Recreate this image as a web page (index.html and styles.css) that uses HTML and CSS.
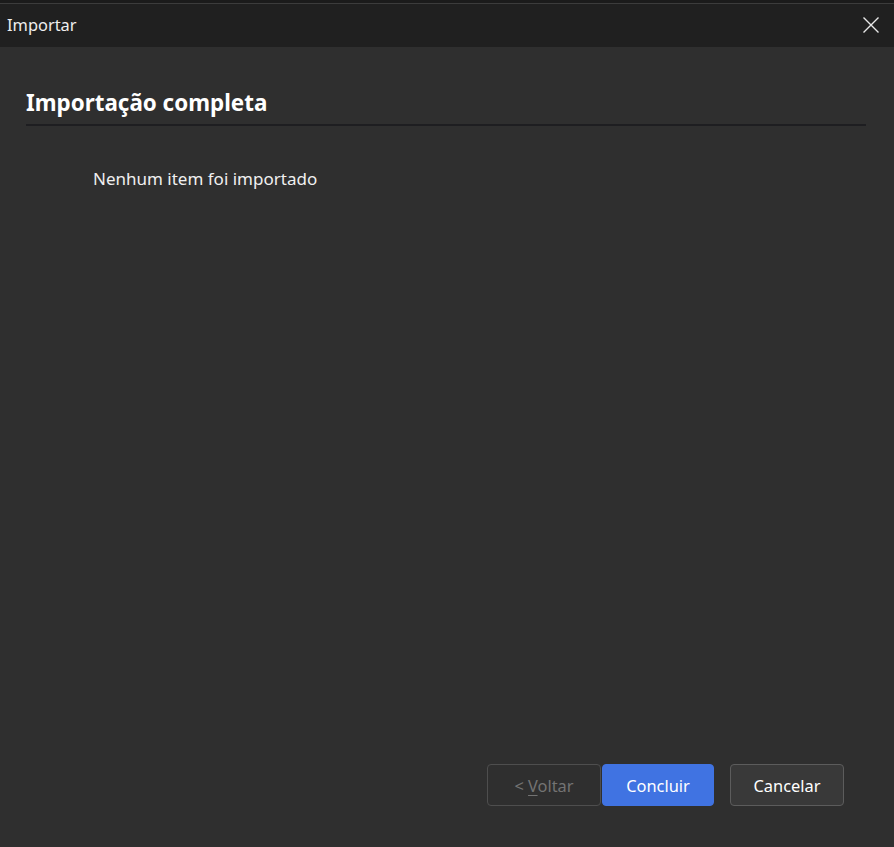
FILE: index.html
```html
<!DOCTYPE html>
<html lang="pt">
<head>
<meta charset="utf-8">
<link rel="stylesheet" href="styles.css">
</head>
<body>
<div class="window">
  <div class="topedge"></div>
  <header class="titlebar">
    <span class="title">Importar</span>
    <svg class="close" width="18" height="18" viewBox="0 0 18 18"><path d="M1.5 1.5 L16.5 16.5 M16.5 1.5 L1.5 16.5" stroke="#e8e8e8" stroke-width="1.4" fill="none"/></svg>
  </header>
  <main class="content">
    <h1 class="heading">Importação completa</h1>
    <p class="message">Nenhum item foi importado</p>
    <div class="spacer"></div>
    <div class="buttons">
      <button class="btn btn-disabled">&lt; <u>V</u>oltar</button>
      <button class="btn btn-primary">Concluir</button>
      <button class="btn btn-secondary">Cancelar</button>
    </div>
  </main>
</div>
</body>
</html>
```
FILE: styles.css
```css
html, body {
  margin: 0;
  padding: 0;
  height: 100%;
  background: #2f2f2f;
}
body {
  font-family: "Noto Sans", "Open Sans", sans-serif;
  color: #f2f2f2;
}
.window {
  display: flex;
  flex-direction: column;
  height: 847px;
}
.topedge {
  height: 3px;
  background: #1b1b1b;
  border-bottom: 1px solid #3c3c3c;
}
.titlebar {
  height: 43px;
  background: #202020;
  display: flex;
  align-items: center;
  justify-content: space-between;
  padding: 0 14px 0 7px;
}
.title {
  font-size: 16.4px;
  color: #eeeeee;
  padding-bottom: 2px;
}
.close {
  display: block;
  margin-top: -2px;
}
.content {
  flex: 1;
  display: flex;
  flex-direction: column;
  padding: 0 28px 41px 27px;
}
.heading {
  margin: 41px 0 0 -1px;
  font-size: 22.4px;
  line-height: 30px;
  font-weight: 700;
  color: #ffffff;
  padding-bottom: 6px;
  border-bottom: 2px solid #1e1e21;
}
.message {
  margin: 41px 0 0 66px;
  font-size: 17px;
  line-height: 24px;
  color: #f0f0f0;
}
.spacer {
  flex: 1;
}
.buttons {
  display: flex;
  justify-content: flex-end;
  padding-right: 22px;
}
.btn {
  height: 42px;
  border-radius: 4px;
  font-family: inherit;
  font-size: 16.4px;
  padding: 0;
  border: 1px solid #5b5b5b;
}
.btn-disabled {
  width: 114px;
  background: #2f2f2f;
  border-color: #4e4e4e;
  color: #737373;
}
.btn-disabled u {
  text-underline-offset: 3px;
}
.btn-primary {
  width: 112px;
  margin-left: 1px;
  background: #4073e2;
  border-color: #4073e2;
  color: #ffffff;
}
.btn-secondary {
  width: 114px;
  margin-left: 16px;
  background: #393939;
  border-color: #5c5c5c;
  color: #ffffff;
}
```
